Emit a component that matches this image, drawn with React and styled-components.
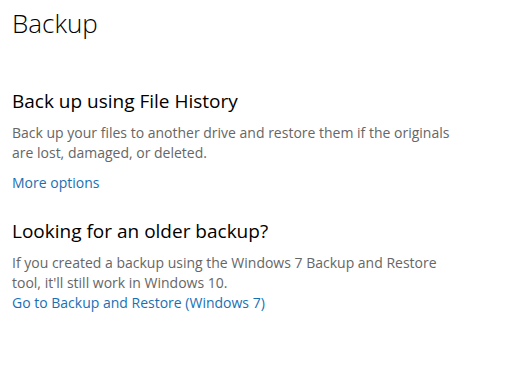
import styled, { createGlobalStyle } from 'styled-components';

const Global = createGlobalStyle`
    html, body {
        margin: 0;
        background: #fff;
    }
    body {
        font-family: "Open Sans", "Noto Sans", "Liberation Sans", sans-serif;
    }
`;

const Page = styled.main`
    display: flex;
    flex-direction: column;
    padding: 5px 12px 0 12px;
    width: 525px;
    height: 383px;
    box-sizing: border-box;
`;

const Title = styled.h1`
    margin: 0 0 47px 0;
    font-size: 26px;
    font-weight: 300;
    line-height: 36px;
    color: #000;
`;

const Section = styled.section`
    display: flex;
    flex-direction: column;
    margin-bottom: ${props => props.gap || '0px'};
`;

const Heading = styled.h2`
    margin: 0 0 9px 0;
    font-size: 19px;
    font-weight: 400;
    line-height: 26px;
    color: #000;
`;

const Text = styled.p`
    margin: 0;
    font-size: 14px;
    line-height: 20px;
    color: #666;
    max-width: 455px;
`;

const Link = styled.a`
    display: block;
    margin-top: ${props => props.top || '0px'};
    font-size: 14px;
    line-height: 20px;
    color: #1a6fb3;
    text-decoration: none;
    cursor: pointer;
`;

export default function App() {
    return (
        <Page>
            <Global />
            <Title>Backup</Title>
            <Section gap='25px'>
                <Heading>Back up using File History</Heading>
                <Text>Back up your files to another drive and restore them if the originals are lost, damaged, or deleted.</Text>
                <Link top='10px'>More options</Link>
            </Section>
            <Section>
                <Heading>Looking for an older backup?</Heading>
                <Text>If you created a backup using the Windows 7 Backup and Restore tool, it'll still work in Windows 10.</Text>
                <Link>Go to Backup and Restore (Windows 7)</Link>
            </Section>
        </Page>
    );
}
